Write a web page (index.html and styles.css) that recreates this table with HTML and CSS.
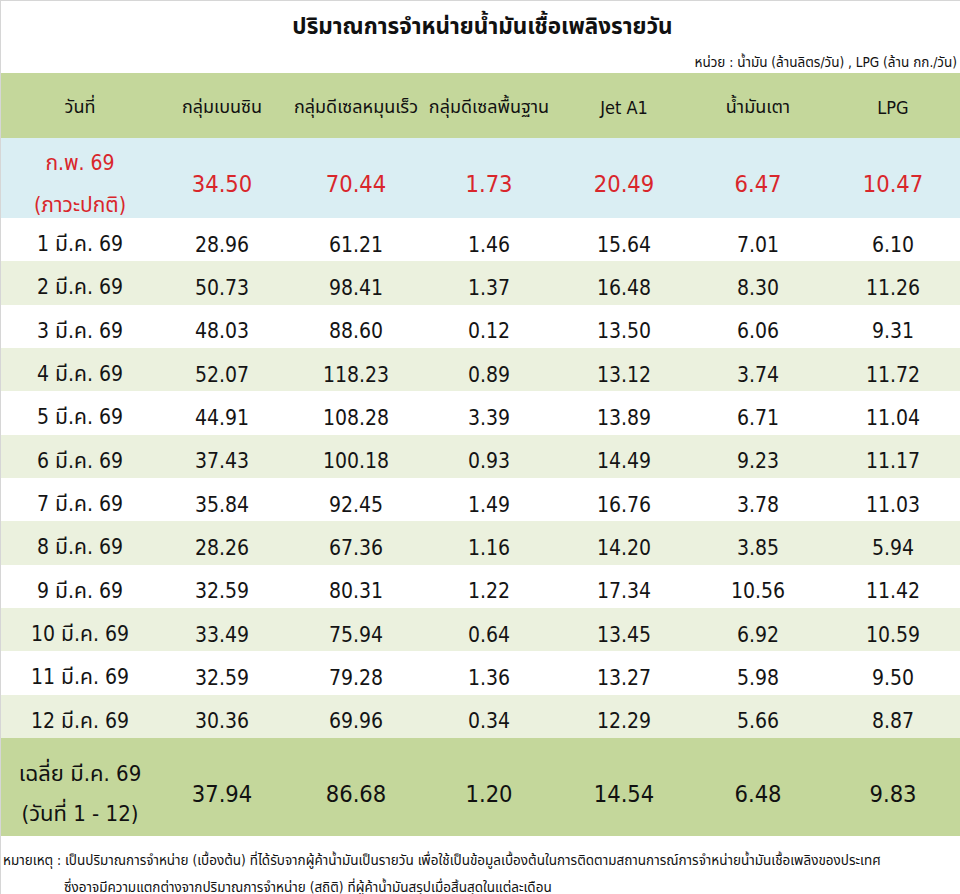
FILE: index.html
```html
<!DOCTYPE html>
<html lang="th">
<head>
<meta charset="utf-8">
<link rel="stylesheet" href="styles.css">
</head>
<body>
<div class="sheet">
  <h1 class="title">ปริมาณการจำหน่ายน้ำมันเชื้อเพลิงรายวัน</h1>
  <div class="units">หน่วย : น้ำมัน (ล้านลิตร/วัน) , LPG (ล้าน กก./วัน)</div>
  <table class="grid">
    <colgroup>
      <col class="c1"><col class="c2"><col class="c3"><col class="c4"><col class="c5"><col class="c6"><col class="c7">
    </colgroup>
    <thead>
      <tr class="head">
        <th>วันที่</th><th>กลุ่มเบนซิน</th><th>กลุ่มดีเซลหมุนเร็ว</th><th>กลุ่มดีเซลพื้นฐาน</th><th>Jet A1</th><th>น้ำมันเตา</th><th>LPG</th>
      </tr>
    </thead>
    <tbody>
      <tr class="base">
        <td class="date"><div class="two-line">ก.พ. 69<br>(ภาวะปกติ)</div></td><td>34.50</td><td>70.44</td><td>1.73</td><td>20.49</td><td>6.47</td><td>10.47</td>
      </tr>
      <tr class="day"><td class="date">1 มี.ค. 69</td><td>28.96</td><td>61.21</td><td>1.46</td><td>15.64</td><td>7.01</td><td>6.10</td></tr>
      <tr class="day alt"><td class="date">2 มี.ค. 69</td><td>50.73</td><td>98.41</td><td>1.37</td><td>16.48</td><td>8.30</td><td>11.26</td></tr>
      <tr class="day"><td class="date">3 มี.ค. 69</td><td>48.03</td><td>88.60</td><td>0.12</td><td>13.50</td><td>6.06</td><td>9.31</td></tr>
      <tr class="day alt"><td class="date">4 มี.ค. 69</td><td>52.07</td><td>118.23</td><td>0.89</td><td>13.12</td><td>3.74</td><td>11.72</td></tr>
      <tr class="day"><td class="date">5 มี.ค. 69</td><td>44.91</td><td>108.28</td><td>3.39</td><td>13.89</td><td>6.71</td><td>11.04</td></tr>
      <tr class="day alt"><td class="date">6 มี.ค. 69</td><td>37.43</td><td>100.18</td><td>0.93</td><td>14.49</td><td>9.23</td><td>11.17</td></tr>
      <tr class="day"><td class="date">7 มี.ค. 69</td><td>35.84</td><td>92.45</td><td>1.49</td><td>16.76</td><td>3.78</td><td>11.03</td></tr>
      <tr class="day alt"><td class="date">8 มี.ค. 69</td><td>28.26</td><td>67.36</td><td>1.16</td><td>14.20</td><td>3.85</td><td>5.94</td></tr>
      <tr class="day"><td class="date">9 มี.ค. 69</td><td>32.59</td><td>80.31</td><td>1.22</td><td>17.34</td><td>10.56</td><td>11.42</td></tr>
      <tr class="day alt"><td class="date">10 มี.ค. 69</td><td>33.49</td><td>75.94</td><td>0.64</td><td>13.45</td><td>6.92</td><td>10.59</td></tr>
      <tr class="day"><td class="date">11 มี.ค. 69</td><td>32.59</td><td>79.28</td><td>1.36</td><td>13.27</td><td>5.98</td><td>9.50</td></tr>
      <tr class="day alt"><td class="date">12 มี.ค. 69</td><td>30.36</td><td>69.96</td><td>0.34</td><td>12.29</td><td>5.66</td><td>8.87</td></tr>
      <tr class="avg">
        <td class="date">เฉลี่ย มี.ค. 69<br>(วันที่ 1 - 12)</td><td>37.94</td><td>86.68</td><td>1.20</td><td>14.54</td><td>6.48</td><td>9.83</td>
      </tr>
    </tbody>
  </table>
  <div class="notes">
    <div class="note-line"><span class="note-label">หมายเหตุ :</span> เป็นปริมาณการจำหน่าย (เบื้องต้น) ที่ได้รับจากผู้ค้าน้ำมันเป็นรายวัน เพื่อใช้เป็นข้อมูลเบื้องต้นในการติดตามสถานการณ์การจำหน่ายน้ำมันเชื้อเพลิงของประเทศ</div>
    <div class="note-line indent">ซึ่งอาจมีความแตกต่างจากปริมาณการจำหน่าย (สถิติ) ที่ผู้ค้าน้ำมันสรุปเมื่อสิ้นสุดในแต่ละเดือน</div>
  </div>
</div>
</body>
</html>
```
FILE: styles.css
```css
html, body {
  margin: 0;
  padding: 0;
  background: #ffffff;
}

body {
  font-family: "DejaVu Sans Condensed", "DejaVu Sans", "Noto Sans Thai", "Noto Sans", sans-serif;
  color: #141414;
}

.sheet {
  width: 960px;
  height: 894px;
  box-sizing: border-box;
  border-top: 1px solid #d6d6d6;
  border-left: 1px solid #d6d6d6;
  overflow: hidden;
}

.title {
  margin: 0;
  height: 50px;
  line-height: 50px;
  text-align: center;
  font-size: 22.5px;
  font-weight: bold;
  color: #111;
  padding-left: 4px;
}

.units {
  height: 22px;
  line-height: 22px;
  text-align: right;
  font-size: 13.5px;
  padding-right: 3px;
  color: #111;
}

.grid {
  width: 960px;
  border-collapse: collapse;
  table-layout: fixed;
  margin-left: -1px;
}

.c1 { width: 152px; }
.c2 { width: 140px; }
.c3 { width: 128px; }
.c4 { width: 138px; }
.c5 { width: 132px; }
.c6 { width: 136px; }
.c7 { width: 134px; }

.grid th, .grid td {
  padding: 0;
  text-align: center;
  vertical-align: middle;
}

.head th {
  background: #c4d79b;
  height: 65px;
  box-sizing: border-box;
  padding-top: 4px;
  font-size: 18px;
  font-weight: normal;
  color: #111;
}

.head th:first-child {
  padding-left: 8px;
}

.base td {
  background: #daeef3;
  height: 80px;
  box-sizing: border-box;
  padding-top: 12px;
  color: #d9262b;
  font-size: 23.5px;
}

.grid .base td.date {
  padding-top: 0;
  font-size: 21px;
}

.two-line {
  line-height: 42px;
  margin-top: 4px;
  margin-bottom: -8px;
}

.day td {
  height: 43.33px;
  box-sizing: border-box;
  padding-top: 10px;
  font-size: 21px;
  background: #ffffff;
}

.day.alt td {
  background: #ebf1de;
}

.grid td.date {
  padding-left: 8px;
}

.avg td {
  background: #c4d79b;
  height: 98px;
  box-sizing: border-box;
  padding-top: 14px;
  font-size: 23.5px;
  color: #111;
}

.avg td.date {
  font-size: 22px;
  line-height: 40px;
}

.notes {
  padding-top: 11px;
  font-size: 13.5px;
  color: #111;
}

.note-line {
  height: 27px;
  line-height: 27px;
  white-space: nowrap;
  padding-left: 2px;
}

.note-line.indent {
  padding-left: 63px;
}
```
